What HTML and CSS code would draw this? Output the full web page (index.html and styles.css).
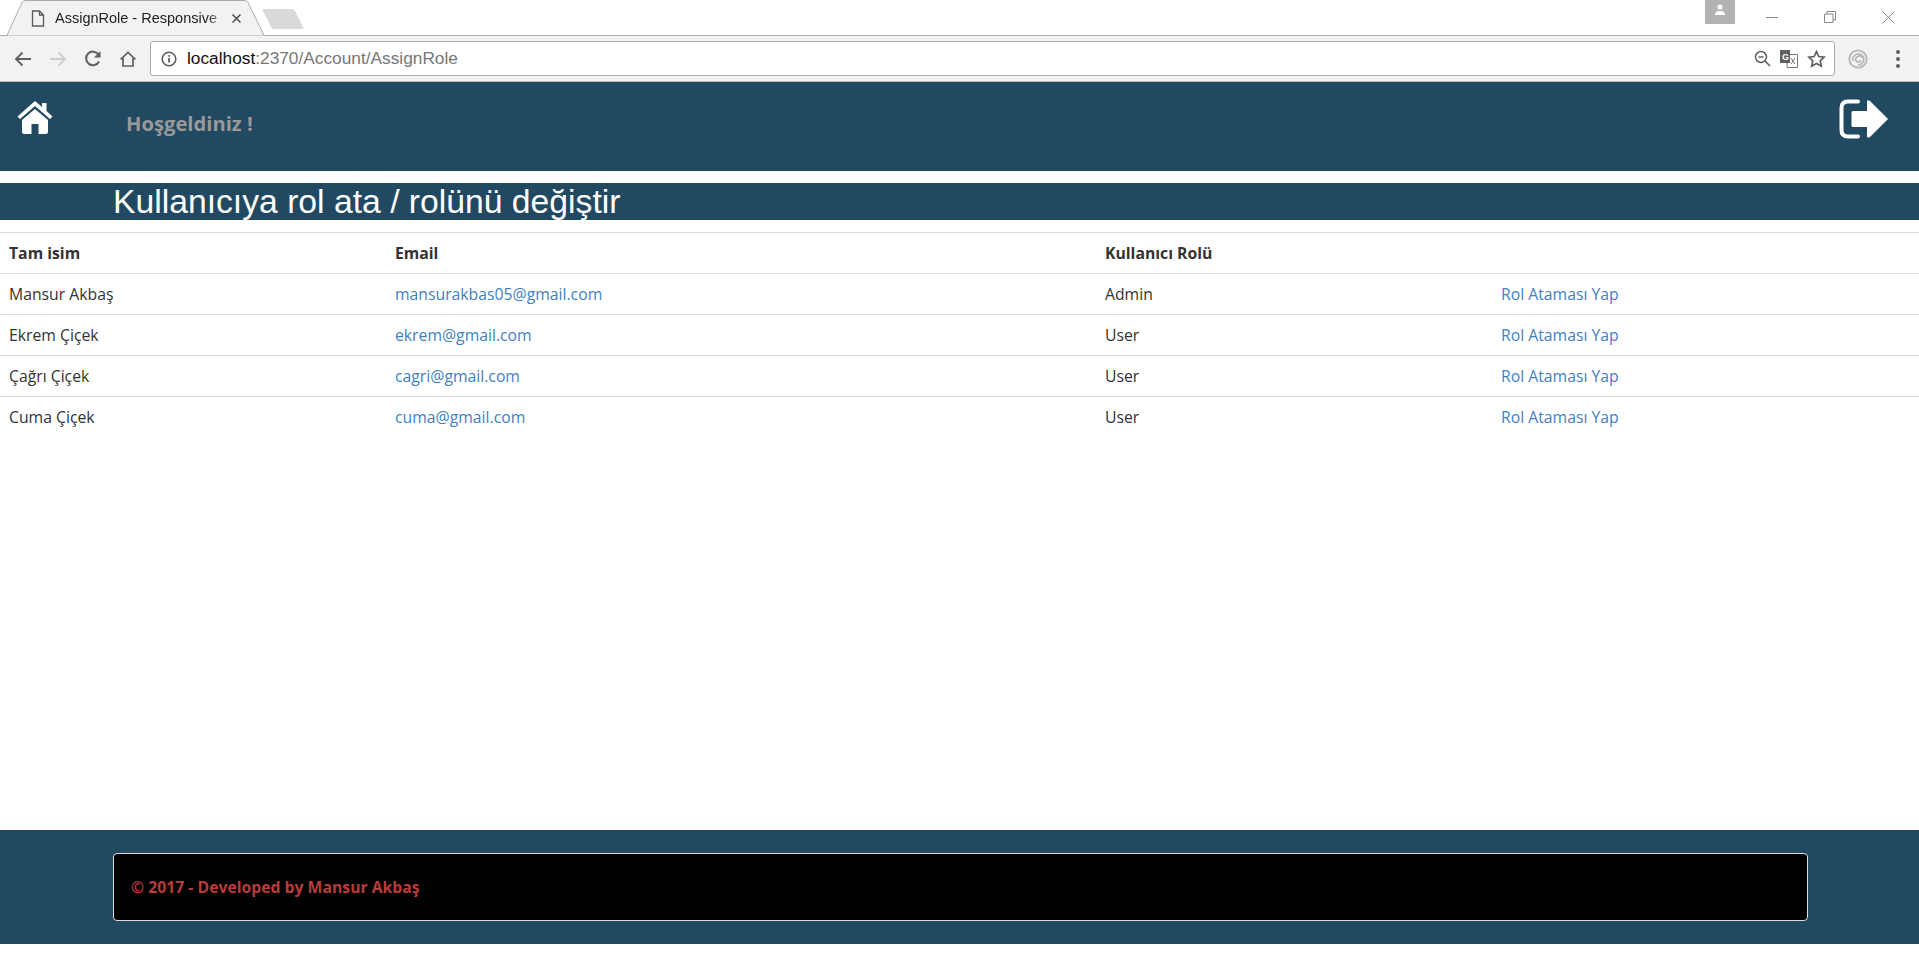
FILE: index.html
```html
<!DOCTYPE html>
<html lang="tr">
<head>
  <meta charset="UTF-8" />
  <title>AssignRole - Responsive</title>
  <link rel="stylesheet" href="styles.css">
</head>
<body>
  <!-- browser chrome -->
  <div class="tabstrip">
    <div class="tab">
      <svg class="tab-shape" width="268" height="36" viewBox="0 0 268 36">
        <path d="M7 35.500 L22 2.500 Q23 0.500 26 0.500 L244 0.500 Q247 0.500 248 2.500 L264 35.500" fill="#f2f2f2" stroke="#aaa"/>
      </svg>
      <svg class="tab-file" width="14" height="17" viewBox="0 0 14 17"><path d="M1.500 1h7l4 4v11h-11z M8.500 1v4h4" fill="none" stroke="#5a5a5a" stroke-width="1.300"/></svg>
      <span class="tab-title">AssignRole - Responsive</span>
      <svg class="tab-close" width="9" height="9" viewBox="0 0 9 9"><path d="M.5.500l8 8M8.500.500l-8 8" stroke="#444" stroke-width="1.400"/></svg>
    </div>
    <svg class="new-tab" width="42" height="22" viewBox="0 0 42 22"><path d="M2 1h28q2 0 3 2l8 16q1 2-1 2H12q-2 0-3-2L1 3q-1-2 1-2z" fill="#d9d9d9"/></svg>
    <div class="window-controls">
      <div class="profile"><svg width="14" height="12" viewBox="0 0 14 12"><circle cx="7" cy="3" r="2.600" fill="#fff"/><path d="M2 11q0-4 5-4t5 4z" fill="#fff"/></svg></div>
      <svg class="win-btn" width="12" height="12" viewBox="0 0 12 12"><path d="M0 6.500h12" stroke="#888"/></svg>
      <svg class="win-btn" width="12" height="12" viewBox="0 0 12 12"><path d="M.5 3h8.500v8.500H.5z M3 3V.5h8.500V9H9" fill="none" stroke="#888"/></svg>
      <svg class="win-btn" width="13" height="13" viewBox="0 0 13 13"><path d="M.5.5l12 12M12.500.5l-12 12" stroke="#888"/></svg>
    </div>
  </div>
  <div class="toolbar">
    <svg class="nav-icon" width="18" height="16" viewBox="0 0 18 16"><path d="M17 8H2M8.500 1.500L2 8l6.500 6.500" fill="none" stroke="#5f5f5f" stroke-width="1.800"/></svg>
    <svg class="nav-icon" width="18" height="16" viewBox="0 0 18 16"><path d="M1 8h15M9.500 1.500L16 8l-6.500 6.500" fill="none" stroke="#cdcdcd" stroke-width="1.800"/></svg>
    <svg class="nav-icon" width="18" height="18" viewBox="0 0 18 18"><path d="M15 11.500A6.800 6.800 0 1 1 14.500 4.500" fill="none" stroke="#5f5f5f" stroke-width="2"/><path d="M16.500 1v6.500H10z" fill="#5f5f5f"/></svg>
    <svg class="nav-icon" width="18" height="16" viewBox="0 0 18 16"><path d="M1.500 8.500L9 1.500l7.500 7M4 7v8h10V7" fill="none" stroke="#5f5f5f" stroke-width="1.700"/></svg>
    <div class="omnibox">
      <svg class="info-icon" width="16" height="16" viewBox="0 0 16 16"><circle cx="8" cy="8" r="6.800" fill="none" stroke="#5f5f5f" stroke-width="1.600"/><path d="M8 7v4.500M8 4.300v1.500" stroke="#5f5f5f" stroke-width="1.800"/></svg>
      <span class="url"><span class="url-host">localhost</span>:2370/Account/AssignRole</span>
      <svg class="omni-icon" width="17" height="17" viewBox="0 0 17 17"><circle cx="7" cy="7" r="5.500" fill="none" stroke="#5f5f5f" stroke-width="1.500"/><path d="M4.500 7h5M11 11l5 5" stroke="#5f5f5f" stroke-width="1.600"/></svg>
      <svg class="omni-icon translate-icon" width="18" height="18" viewBox="0 0 18 18">
        <path d="M7 4.500h10.500v13H7z" fill="#fff" stroke="#777"/>
        <path d="M0 0h10v13H0z" fill="#5f5f5f"/>
        <text class="translate-g" x="2" y="9.500">G</text>
        <path d="M11 8l4 6M15 8l-4 6" stroke="#777"/>
      </svg>
      <svg class="omni-icon" width="19" height="18" viewBox="0 0 18 18"><path d="M9 1.500l2.300 5 5.400.6-4 3.700 1.100 5.400L9 13.500l-4.800 2.700 1.100-5.400-4-3.700 5.400-.6z" fill="none" stroke="#5f5f5f" stroke-width="1.700"/></svg>
    </div>
    <svg class="ext-icon" width="20" height="20" viewBox="0 0 20 20"><circle cx="10" cy="10" r="8.700" fill="none" stroke="#b5b5b5" stroke-width="1.800"/><path d="M5 12a5.500 5.500 0 1 1 5 4M15 9a4 4 0 0 0-7.500 1.500 3 3 0 0 0 5.500 1" fill="none" stroke="#b5b5b5" stroke-width="1.600"/></svg>
    <div class="menu-dots"><i></i><i></i><i></i></div>
  </div>

  <!-- site header -->
  <header class="site-header">
    <a class="home-link" href="#">
      <svg width="38" height="36" viewBox="0 0 38 36"><path d="M19 1L1.500 16.500l2.500 2.500L19 6l15 13 2.500-2.500L30.500 11V3h-4.500v4z" fill="#fff"/><path d="M19 9L6 20v12q0 2 2 2h7.500V24h7v10H30q2 0 2-2V20z" fill="#fff"/></svg>
    </a>
    <span class="welcome">Hoşgeldiniz !</span>
    <a class="logout-link" href="#">
      <svg width="50" height="40" viewBox="0 0 50 40"><path d="M19 2.500H9q-6.500 0-6.500 6.500v22q0 6.500 6.500 6.500h10" fill="none" stroke="#fff" stroke-width="4" stroke-linecap="round"/><path d="M14 12h14V3q0-3 3-1l18 18-18 18q-3 2-3-1v-9H14q-1.500 0-1.500-1.500v-13q0-1.500 1.500-1.500z" fill="#fff"/></svg>
    </a>
  </header>

  <main class="content">
    <h2 class="page-title">Kullanıcıya rol ata / rolünü değiştir</h2>
    <table class="user-table">
      <colgroup>
        <col class="col-name"><col class="col-email"><col class="col-role"><col>
      </colgroup>
      <thead>
        <tr><th>Tam isim</th><th>Email</th><th>Kullanıcı Rolü</th><th></th></tr>
      </thead>
      <tbody>
        <tr><td>Mansur Akbaş</td><td><a href="#">mansurakbas05@gmail.com</a></td><td>Admin</td><td><a href="#">Rol Ataması Yap</a></td></tr>
        <tr><td>Ekrem Çiçek</td><td><a href="#">ekrem@gmail.com</a></td><td>User</td><td><a href="#">Rol Ataması Yap</a></td></tr>
        <tr><td>Çağrı Çiçek</td><td><a href="#">cagri@gmail.com</a></td><td>User</td><td><a href="#">Rol Ataması Yap</a></td></tr>
        <tr><td>Cuma Çiçek</td><td><a href="#">cuma@gmail.com</a></td><td>User</td><td><a href="#">Rol Ataması Yap</a></td></tr>
      </tbody>
    </table>
  </main>

  <footer class="site-footer">
    <div class="footer-box">© 2017 - Developed by Mansur Akbaş</div>
  </footer>
</body>
</html>
```

FILE: styles.css
```css
* {
  margin: 0;
  padding: 0;
  box-sizing: border-box;
}

html, body {
  height: 955px;
  overflow: hidden;
  background: #fff;
}

body {
  display: flex;
  flex-direction: column;
  font-family: "Open Sans", sans-serif;
  font-size: 15.75px;
  color: #333;
}

/* browser chrome */
.tabstrip {
  height: 36px;
  display: flex;
  position: relative;
  background: #fff;
  border-bottom: 1px solid #aaa;
}

.tab {
  width: 262px;
  height: 36px;
  display: flex;
  align-items: center;
  position: relative;
  padding: 0 0 0 31px;
  font-family: "Liberation Sans", sans-serif;
  font-size: 14.5px;
  color: #222;
}

.tab-shape {
  position: absolute;
  left: 0;
  top: 0;
}

.tab-file, .tab-title, .tab-close {
  position: relative;
}

.tab-title {
  width: 168px;
  margin-left: 10px;
  white-space: nowrap;
  -webkit-mask-image: linear-gradient(to right, #000 90%, rgba(0,0,0,0.3));
  mask-image: linear-gradient(to right, #000 90%, rgba(0,0,0,0.3));
}

.tab-close {
  margin-left: 9px;
}

.new-tab {
  margin: 8px 0 0 0;
}

.window-controls {
  margin-left: auto;
  display: flex;
  align-items: flex-start;
}

.profile {
  width: 30px;
  height: 24px;
  background: #b3b3b3;
  display: flex;
  justify-content: center;
  padding-top: 4px;
  margin-right: 31px;
}

.win-btn {
  margin: 11px 46px 0 0;
}

.win-btn:last-child {
  margin-right: 24px;
}

.toolbar {
  height: 46px;
  display: flex;
  align-items: center;
  background: #f2f2f2;
  border-bottom: 1px solid #bbb;
  padding-left: 14px;
}

.nav-icon {
  margin-right: 17px;
}

.omnibox {
  width: 1685px;
  height: 35px;
  margin-left: -4px;
  display: flex;
  align-items: center;
  background: #fff;
  border: 1px solid #aaa;
  border-radius: 3px;
  padding: 0 8px 0 10px;
}

.info-icon {
  margin-right: 10px;
}

.url {
  flex: 1;
  font-family: "Liberation Sans", sans-serif;
  font-size: 17.3px;
  color: #777;
}

.url-host {
  color: #111;
}

.omni-icon {
  margin-left: 9px;
}

.translate-g {
  font-family: "Liberation Sans", sans-serif;
  font-size: 9px;
  font-weight: 700;
  fill: #fff;
}

.ext-icon {
  margin-left: 13px;
}

.menu-dots {
  margin-left: 28px;
  display: flex;
  flex-direction: column;
  gap: 3px;
}

.menu-dots i {
  width: 4px;
  height: 4px;
  border-radius: 50%;
  background: #5f5f5f;
}

/* site header */
.site-header {
  height: 89px;
  flex: none;
  display: flex;
  background: #224962;
  padding: 18px 30px 0 16px;
}

.home-link {
  height: 36px;
}

.welcome {
  margin: 9px 0 0 72px;
  font-size: 20.2px;
  font-weight: 700;
  color: #999;
}

.logout-link {
  margin: -1px 0 0 auto;
}

/* page content */
.content {
  flex: 1;
  padding-top: 12px;
}

.page-title {
  height: 37px;
  padding-left: 113px;
  background: #224962;
  color: #fff;
  font-family: "Liberation Sans", sans-serif;
  font-size: 33.7px;
  font-weight: 400;
  line-height: 37px;
}

.user-table {
  width: 100%;
  margin-top: 12px;
  table-layout: fixed;
  border-collapse: collapse;
  border-top: 1px solid #ddd;
}

.col-name { width: 387px; }
.col-email { width: 710px; }
.col-role { width: 396px; }

.user-table th,
.user-table td {
  height: 41px;
  padding: 8px;
  text-align: left;
  vertical-align: middle;
  line-height: 24px;
  border-top: 1px solid #ddd;
}

.user-table th:first-child,
.user-table td:first-child {
  padding-left: 9px;
}

.user-table thead th {
  border-top: 0;
  color: #333;
}

.user-table a {
  color: #3f7fc4;
  text-decoration: none;
}

/* footer */
.site-footer {
  height: 114px;
  flex: none;
  margin-bottom: 11px;
  padding: 23px 111px 23px 113px;
  background: #224962;
}

.footer-box {
  height: 68px;
  padding-left: 17px;
  background: #000;
  border: 1px solid #ddd;
  border-radius: 4px;
  color: #b83c3c;
  font-weight: 700;
  line-height: 66px;
}
```
